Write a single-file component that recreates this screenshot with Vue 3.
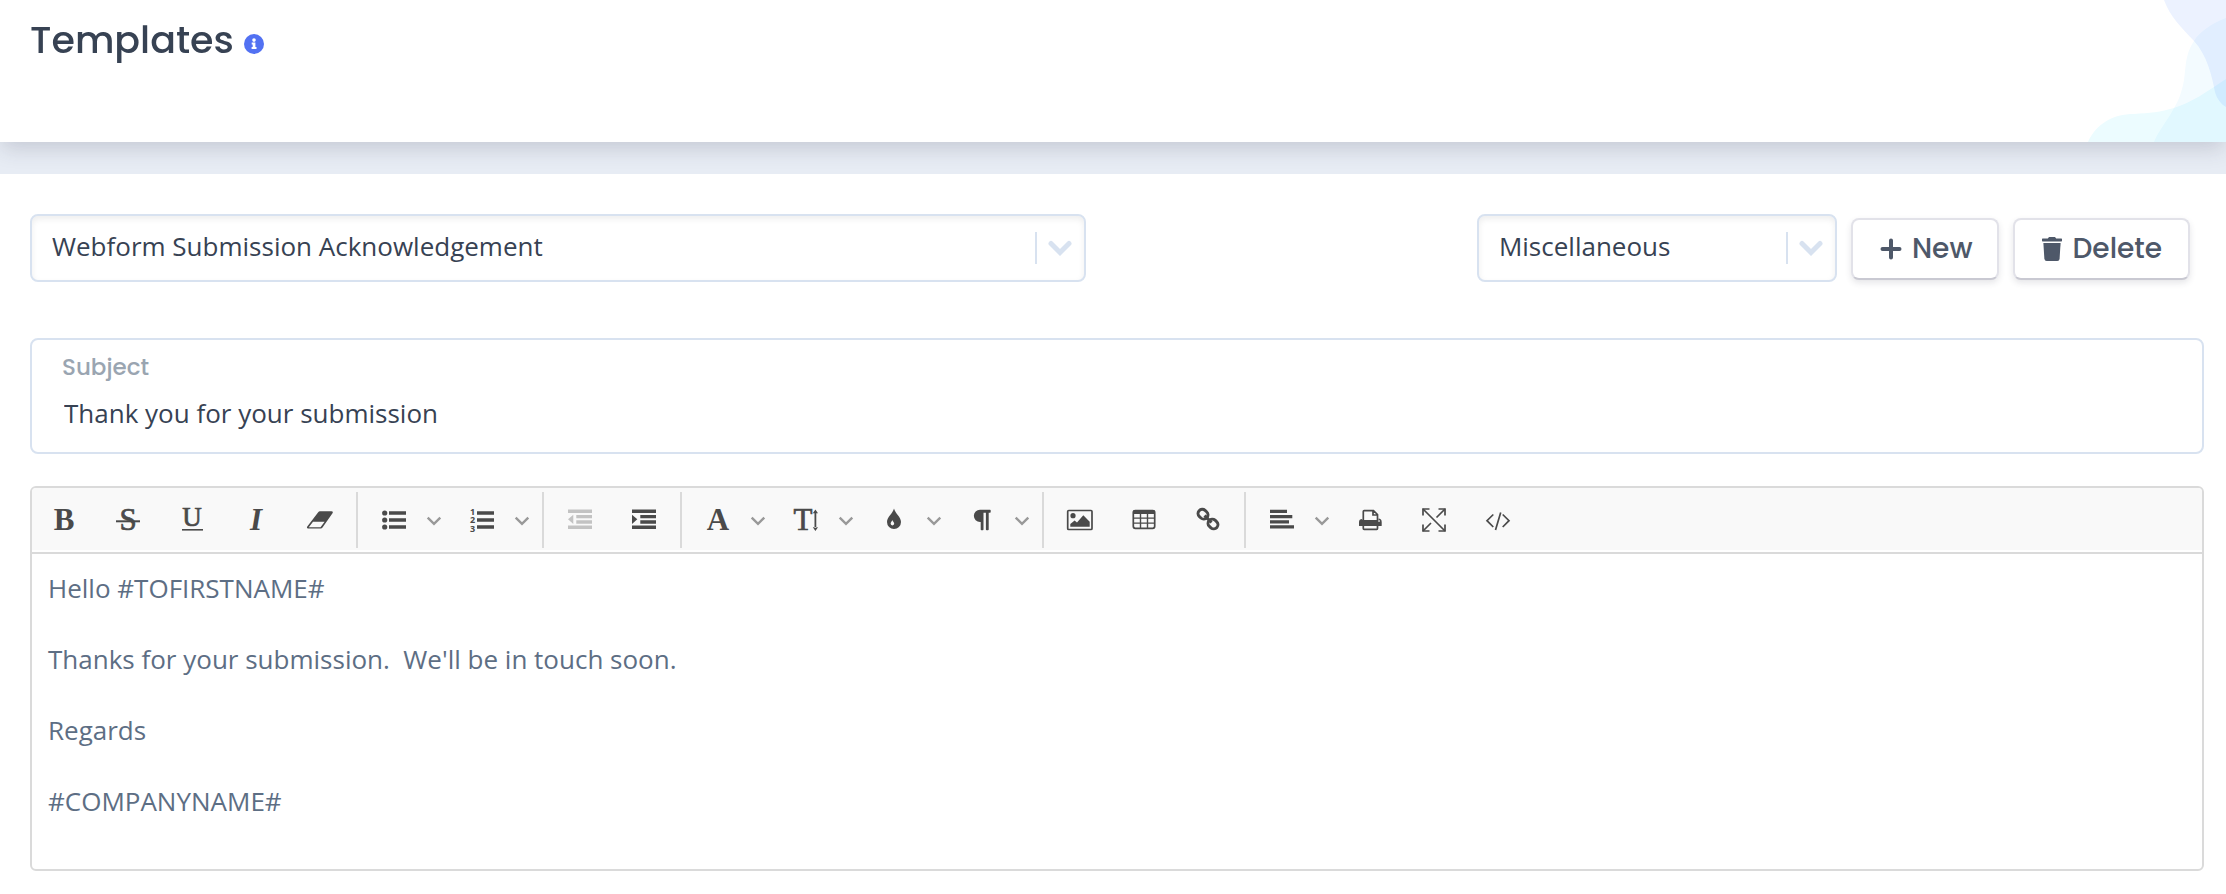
<script setup>
import { ref } from 'vue'

const template = ref('Webform Submission Acknowledgement')
const category = ref('Miscellaneous')
const subject = ref('Thank you for your submission')

const groups = [
  [
    { id: 'bold', label: 'Bold' },
    { id: 'strike', label: 'Strikethrough' },
    { id: 'underline', label: 'Underline' },
    { id: 'italic', label: 'Italic' },
    { id: 'eraser', label: 'Clear formatting' }
  ],
  [
    { id: 'ul', label: 'Unordered list', menu: true },
    { id: 'ol', label: 'Ordered list', menu: true }
  ],
  [
    { id: 'outdent', label: 'Decrease indent', disabled: true },
    { id: 'indent', label: 'Increase indent' }
  ],
  [
    { id: 'font', label: 'Font family', menu: true },
    { id: 'size', label: 'Font size', menu: true },
    { id: 'color', label: 'Colors', menu: true },
    { id: 'paragraph', label: 'Paragraph format', menu: true }
  ],
  [
    { id: 'image', label: 'Insert image' },
    { id: 'table', label: 'Insert table' },
    { id: 'link', label: 'Insert link' }
  ],
  [
    { id: 'align', label: 'Align', menu: true },
    { id: 'print', label: 'Print' },
    { id: 'fullscreen', label: 'Fullscreen' },
    { id: 'code', label: 'Code view' }
  ]
]

const paragraphs = [
  'Hello #TOFIRSTNAME#',
  "Thanks for your submission.\u00a0 We'll be in touch soon.",
  'Regards',
  '#COMPANYNAME#'
]
</script>

<template>
  <div class="page">
    <header class="header">
      <h1 class="title">Templates</h1>
      <button class="info" type="button" aria-label="About templates">
        <svg viewBox="0 0 20 20" width="20" height="20">
          <circle cx="10" cy="10" r="10" fill="#5271f2" />
          <circle cx="10" cy="6.1" r="1.8" fill="#fff" />
          <path d="M7.7 8.6h3.7v4.5h1.1v1.9H7.6v-1.9h1.1v-2.6h-1z" fill="#fff" />
        </svg>
      </button>
      <svg class="waves" viewBox="0 0 176 142" width="176" height="142" aria-hidden="true">
        <path fill="#ecf2ff" d="M114 0C120 17 132 28 144 41C157 55 162 76 165 92C167 99 171 104 176 107V0z" />
        <path fill="#f3fbff" d="M176 18C163 23 150 31 144 41C135 54 136 67 134 80C132 92 128 102 124 108C118 120 109 130 104 142H176z" />
        <path fill="#ecfcff" d="M38 142C46 124 63 114 84 114C99 113 111 112 124 108C143 102 156 92 176 79V142z" />
      </svg>
    </header>

    <main class="content">
      <div class="controls">
        <div class="picker picker-template">
          <select v-model="template" aria-label="Template">
            <option>Webform Submission Acknowledgement</option>
          </select>
          <span class="picker-arrow">
            <svg viewBox="0 0 24 16" width="24" height="16"><path d="M3 3.5l9 9 9-9" /></svg>
          </span>
        </div>
        <div class="actions">
          <div class="picker picker-category">
            <select v-model="category" aria-label="Category">
              <option>Miscellaneous</option>
            </select>
            <span class="picker-arrow">
              <svg viewBox="0 0 24 16" width="24" height="16"><path d="M3 3.5l9 9 9-9" /></svg>
            </span>
          </div>
          <button class="btn btn-new" type="button">
            <svg viewBox="0 0 22 24" width="22" height="24">
              <path d="M11 3.5v17M2.5 12h17" stroke="currentColor" stroke-width="4" stroke-linecap="round" />
            </svg>
            New
          </button>
          <button class="btn btn-delete" type="button">
            <svg viewBox="0 0 22 24" width="22" height="24" fill="currentColor">
              <path d="M1.6 1.5h5.2L8 0h6l1.2 1.5h5.2q.6 0 .6.6v1.7q0 .6-.6.6H1.6q-.6 0-.6-.6V2.100q0-.6.6-.6z" />
              <path d="M2.400 6h17.200l-1 15.800q-.2 2.200-2.300 2.200H5.700q-2.100 0-2.300-2.200z" />
            </svg>
            Delete
          </button>
        </div>
      </div>

      <div class="subject">
        <label for="subject">Subject</label>
        <input id="subject" v-model="subject" type="text" />
      </div>

      <section class="editor">
        <div class="toolbar" role="toolbar" aria-label="Formatting">
          <div v-for="(group, i) in groups" :key="i" class="group">
            <button
              v-for="tool in group"
              :key="tool.id"
              type="button"
              class="tool"
              :disabled="tool.disabled"
              :aria-label="tool.label"
            >
              <svg class="icon" viewBox="0 0 32 32" width="32" height="32">
                <text v-if="tool.id === 'bold'" class="serif bold" x="16" y="26" text-anchor="middle">B</text>
                <g v-else-if="tool.id === 'strike'">
                  <text class="serif semi" x="16" y="26" text-anchor="middle">S</text>
                  <path d="M4 16.300h24v2H4z" />
                </g>
                <g v-else-if="tool.id === 'underline'">
                  <text class="serif semi small" x="16" y="22" text-anchor="middle">U</text>
                  <path d="M6 25h21v1.600H6z" />
                </g>
                <text v-else-if="tool.id === 'italic'" class="serif bold italic" x="16" y="26" text-anchor="middle">I</text>
                <path
                  v-else-if="tool.id === 'eraser'"
                  fill-rule="evenodd"
                  d="M16 7.300H27.500q2 .2 1 2L18.500 23.500q-.6 1-1.800 1H4q-1.700-.2-.9-1.800L14.200 8.200q.7-.9 1.800-.9zM9 17.700L4.800 23.200H16.500L20.600 17.700z"
                />
                <g v-else-if="tool.id === 'ul'">
                  <circle cx="6.700" cy="9" r="2.600" />
                  <circle cx="6.700" cy="16" r="2.600" />
                  <circle cx="6.700" cy="23" r="2.600" />
                  <path d="M11 7.300h17v3.500H11zM11 14.300h17v3.500H11zM11 21.300h17v3.500H11z" />
                </g>
                <g v-else-if="tool.id === 'ol'">
                  <text class="digit" x="6.500" y="10.500" text-anchor="middle">1</text>
                  <text class="digit" x="6.500" y="19.300" text-anchor="middle">2</text>
                  <text class="digit" x="6.500" y="28" text-anchor="middle">3</text>
                  <path d="M11 7.300h17v3.500H11zM11 14.300h17v3.500H11zM11 21.300h17v3.500H11z" />
                </g>
                <path
                  v-else-if="tool.id === 'outdent'"
                  d="M4 5.500h24v3.500H4zM12.300 11h15.700v3.300H12.300zM12.300 16.300h15.700v3.400H12.300zM4 21.500h24V25H4zM9.300 10.700v9.200L4 15.300z"
                />
                <path
                  v-else-if="tool.id === 'indent'"
                  d="M4 5.500h24v3.500H4zM12.300 11h15.700v3.300H12.300zM12.300 16.300h15.700v3.400H12.300zM4 21.500h24V25H4zM4 10.700v9.200L9.300 15.300z"
                />
                <text v-else-if="tool.id === 'font'" class="serif bold" x="16" y="26" text-anchor="middle">A</text>
                <g v-else-if="tool.id === 'size'">
                  <text class="serif semi" x="13" y="26" text-anchor="middle">T</text>
                  <path d="M24.500 8.500h1.800v15.500h-1.800zM25.400 5.500L28 9.300H22.800zM25.400 27L28 23.200H22.800z" />
                </g>
                <path
                  v-else-if="tool.id === 'color'"
                  fill-rule="evenodd"
                  d="M16 4.500C17.200 9.500 23 13 23 18A7 7 0 0 1 9 18C9 13 14.800 9.500 16 4.500zM14.300 16C14 17.300 12.600 18.200 12.600 19.600A1.800 1.800 0 0 0 16.200 19.600C16.200 18.200 14.700 17.300 14.300 16z"
                />
                <path
                  v-else-if="tool.id === 'paragraph'"
                  d="M14 5.700H24q.7 0 .7.700V8q0 .7-.7.700H22.700V25.500q0 .8-.8.800H20.700q-.8 0-.8-.8V8.700H17.500V25.500q0 .8-.8.800H15.500q-.8 0-.8-.8V18H14A6.150 6.150 0 0 1 14 5.700z"
                />
                <g v-else-if="tool.id === 'image'">
                  <rect class="line" x="3.700" y="6.500" width="24.300" height="19" rx="1" />
                  <circle cx="9" cy="11.700" r="2.600" />
                  <path d="M6.300 22.700V20L10.600 16.500 13 18.600 19.300 11.300 25.700 17.700V22.700z" />
                </g>
                <g v-else-if="tool.id === 'table'">
                  <rect class="line" x="5.300" y="6.500" width="21.400" height="17.800" rx="2" />
                  <path d="M5 6.500h22v3.500H5zM5 13.500h22v1.300H5zM5 18.500h22v1.300H5zM11.800 8h1.400v16h-1.400zM18.800 8h1.400v16h-1.400z" />
                </g>
                <g v-else-if="tool.id === 'link'" class="chain">
                  <rect x="-5.200" y="-4.200" width="10.400" height="8.400" rx="4.200" transform="translate(11 10.200) rotate(42)" />
                  <rect x="-5.200" y="-4.200" width="10.400" height="8.400" rx="4.200" transform="translate(21 20) rotate(42)" />
                  <path d="M12.500 11.700l7 6.800" />
                </g>
                <path
                  v-else-if="tool.id === 'align'"
                  d="M4 5.700h17v3.400H4zM4 11h22.300v3.300H4zM4 16.200h19v3.300H4zM4 21.300h24v3.300H4z"
                />
                <g v-else-if="tool.id === 'print'">
                  <path
                    class="line"
                    d="M9.300 16V7.500q0-.8.800-.8H19.500L23.500 10.500V16M19 6.700V11H23.500M9.300 21V24.500q0 .8.800.8H22.700q.8 0 .8-.8V21"
                  />
                  <path
                    fill-rule="evenodd"
                    d="M5 18q0-3 3.300-3V16H24.500V14.500Q27.700 14.500 27.700 18V21.500q0 .5-.5.500H5.500q-.5 0-.5-.5zM24.300 16.300h1.500v1.500h-1.500z"
                  />
                </g>
                <g v-else-if="tool.id === 'fullscreen'">
                  <path class="line" d="M5 5L27 27M18.500 13.500L27 5M5 27L13 19" />
                  <path class="line" d="M5 11.500V5H11.500M20.500 5H27V11.500M27 20.500V27H20.500M11.500 27H5V20.500" />
                </g>
                <path
                  v-else-if="tool.id === 'code'"
                  class="line"
                  d="M11.300 10.500L5 16.700L11.300 23M20.700 10.500L27 16.700L20.700 23M18.700 8.500L13.500 26"
                />
              </svg>
              <svg v-if="tool.menu" class="caret" viewBox="0 0 24 32" width="24" height="32">
                <path d="M1.700 13.600L8 19.900L14.300 13.600" />
              </svg>
            </button>
          </div>
        </div>
        <div class="body" contenteditable="true" role="textbox" aria-label="Message" spellcheck="false">
          <p v-for="line in paragraphs" :key="line">{{ line }}</p>
        </div>
      </section>
    </main>
  </div>
</template>

<style>
body {
  background: #fff;
}
</style>

<style scoped>
.page {
  font-family: 'Open Sans', 'Noto Sans', sans-serif;
  font-size: 26px;
  color: #374253;
}

.header {
  position: relative;
  z-index: 1;
  display: flex;
  align-items: flex-start;
  gap: 10px;
  box-sizing: border-box;
  min-height: 142px;
  padding: 14px 30px;
  background: #fff;
  box-shadow: 0 8px 20px -2px rgba(50, 50, 75, 0.19);
}

.title {
  margin: 0;
  font-family: Poppins, Inter, sans-serif;
  font-size: 38px;
  line-height: 52px;
  font-weight: 500;
}

.info {
  display: flex;
  margin: 20px 0 0;
  padding: 0;
  border: 0;
  background: none;
}

.waves {
  position: absolute;
  top: 0;
  right: 0;
}

.waves path {
  mix-blend-mode: multiply;
}

.content {
  padding: 40px 22px 22px 30px;
  border-top: 32px solid #e7ecf4;
}

.controls {
  display: flex;
  align-items: center;
  justify-content: space-between;
  padding-right: 14px;
}

.actions {
  display: flex;
  align-items: center;
  gap: 14px;
}

.picker {
  position: relative;
}

.picker-template {
  width: 1056px;
  max-width: 49%;
}

.picker-category {
  width: 360px;
}

.picker select {
  display: block;
  box-sizing: border-box;
  width: 100%;
  height: 68px;
  padding: 0 60px 4px 20px;
  border: 2px solid #d8e2f0;
  border-radius: 8px;
  appearance: none;
  background: #fff;
  box-shadow: inset 0 3px 6px rgba(0, 0, 0, 0.07);
  color: inherit;
  font: inherit;
}

.picker-arrow {
  position: absolute;
  top: 18px;
  right: 14px;
  display: flex;
  align-items: center;
  height: 32px;
  padding-left: 11px;
  border-left: 2px solid #d8e2f0;
  pointer-events: none;
}

.picker-arrow path {
  fill: none;
  stroke: #d8e2f0;
  stroke-width: 5;
  stroke-linecap: round;
}

.btn {
  display: flex;
  align-items: center;
  justify-content: center;
  gap: 10px;
  height: 62px;
  margin: 2px 0 0;
  padding: 0 26px;
  border: 2px solid #e2e2e9;
  border-bottom-color: #c9c9d2;
  border-radius: 8px;
  background: #fff;
  box-shadow: 0 3px 6px rgba(50, 50, 70, 0.12);
  color: #4e5869;
  font-family: Poppins, Inter, sans-serif;
  font-size: 28px;
  font-weight: 500;
}

.btn-new {
  padding: 0 24px 0 27px;
}

.subject {
  display: flex;
  flex-direction: column;
  margin-top: 56px;
  padding: 12px 30px 20px;
  border: 2px solid #d8e2f0;
  border-radius: 8px;
}

.subject label {
  color: #9aa5b1;
  font-family: Poppins, Inter, sans-serif;
  font-size: 23px;
  line-height: 30px;
  font-weight: 500;
}

.subject input {
  box-sizing: border-box;
  height: 50px;
  padding: 12px 2px 0;
  border: 0;
  outline: 0;
  background: none;
  color: inherit;
  font: inherit;
  line-height: 36px;
}

.editor {
  margin-top: 32px;
  border: 2px solid #dadada;
  border-radius: 6px;
  overflow: hidden;
}

.toolbar {
  display: flex;
  flex-wrap: wrap;
  border-bottom: 2px solid #dadada;
  background: #f9f9f9;
  box-shadow: inset 0 -2px #fff;
}

.group {
  display: flex;
  align-items: flex-start;
}

.group + .group::before {
  content: '';
  width: 2px;
  height: 56px;
  margin: 4px 4px 0;
  background: #dadada;
}

.tool {
  display: flex;
  align-items: center;
  height: 64px;
  padding: 0 0 0 16px;
  border: 0;
  background: none;
  color: #4a4a4a;
}

.tool:disabled {
  color: #c3c3c3;
}

.icon {
  margin-right: 16px;
  overflow: visible;
  fill: currentColor;
}

.caret path {
  fill: none;
  stroke: #999;
  stroke-width: 2.400;
}

.line {
  fill: none;
  stroke: currentColor;
  stroke-width: 1.700;
}

.chain {
  fill: none;
  stroke: currentColor;
  stroke-width: 3;
}

.serif {
  font-family: 'Liberation Serif', serif;
  font-size: 31px;
}

.semi {
  stroke: currentColor;
  stroke-width: 0.700;
}

.bold {
  font-weight: 700;
}

.italic {
  font-style: italic;
}

.small {
  font-size: 27px;
}

.digit {
  font-family: 'Open Sans', sans-serif;
  font-size: 9px;
  font-weight: 700;
}

.body {
  display: flex;
  flex-direction: column;
  gap: 35px;
  min-height: 279px;
  padding: 16px 16px 20px;
  outline: 0;
  color: #5d6e84;
}

.body p {
  margin: 0;
  line-height: 36px;
}
</style>
